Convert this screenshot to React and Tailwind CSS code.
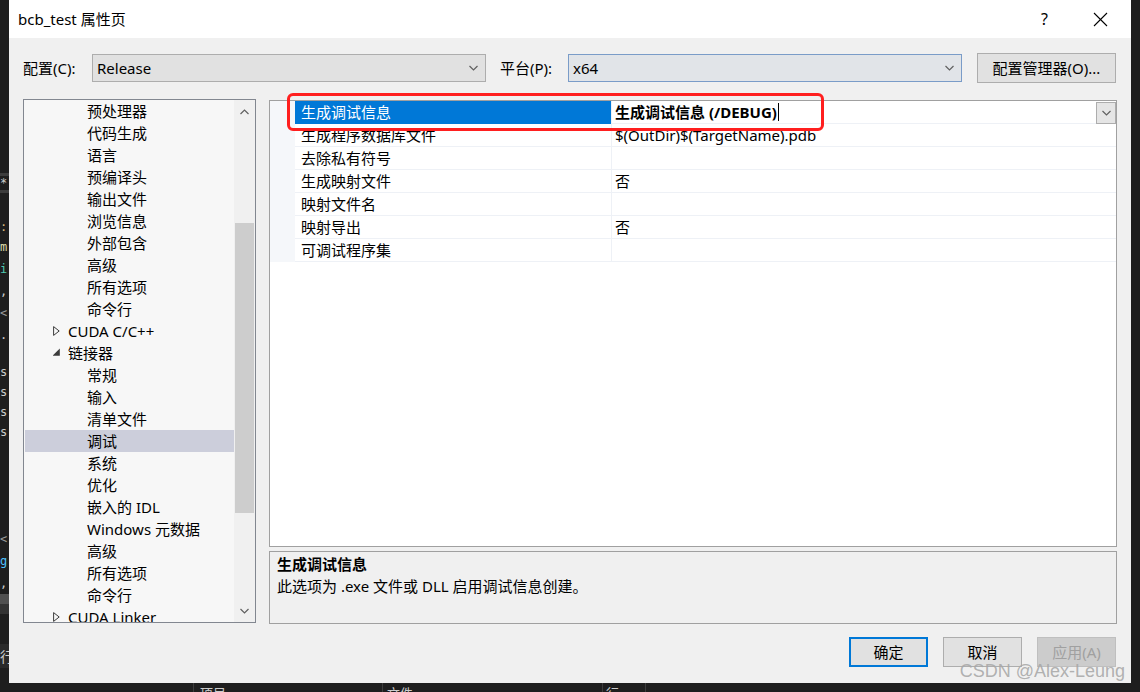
import React from 'react';

const FONT = "font-['Noto_Sans','Noto_Sans_CJK_SC',sans-serif]";

const treeItems = [
  { t: '预处理器', l: 2 },
  { t: '代码生成', l: 2 },
  { t: '语言', l: 2 },
  { t: '预编译头', l: 2 },
  { t: '输出文件', l: 2 },
  { t: '浏览信息', l: 2 },
  { t: '外部包含', l: 2 },
  { t: '高级', l: 2 },
  { t: '所有选项', l: 2 },
  { t: '命令行', l: 2 },
  { t: 'CUDA C/C++', l: 1, arrow: 'closed' },
  { t: '链接器', l: 1, arrow: 'open' },
  { t: '常规', l: 2 },
  { t: '输入', l: 2 },
  { t: '清单文件', l: 2 },
  { t: '调试', l: 2, selected: true },
  { t: '系统', l: 2 },
  { t: '优化', l: 2 },
  { t: '嵌入的 IDL', l: 2 },
  { t: 'Windows 元数据', l: 2 },
  { t: '高级', l: 2 },
  { t: '所有选项', l: 2 },
  { t: '命令行', l: 2 },
  { t: 'CUDA Linker', l: 1, arrow: 'closed' },
];

const gridRows = [
  { name: '生成调试信息', value: '生成调试信息 (/DEBUG)', selected: true },
  { name: '生成程序数据库文件', value: '$(OutDir)$(TargetName).pdb' },
  { name: '去除私有符号', value: '' },
  { name: '生成映射文件', value: '否' },
  { name: '映射文件名', value: '' },
  { name: '映射导出', value: '否' },
  { name: '可调试程序集', value: '' },
];

function Chevron({ up = false, color = '#606060' }) {
  return (
    <svg width="9" height="6" viewBox="0 0 9 6">
      <polyline
        points={up ? '0.5,5 4.5,1 8.5,5' : '0.5,1 4.5,5 8.5,1'}
        fill="none"
        stroke={color}
        strokeWidth="1.2"
      />
    </svg>
  );
}

function Combo({ value, focused }) {
  return (
    <div
      className={`w-[394px] h-[28px] flex items-center justify-between pl-[4px] pr-[7px] border ${
        focused ? 'border-[#7a9cc8] bg-[#e1e4e8]' : 'border-[#adadad] bg-[#e1e1e1]'
      }`}
    >
      <span>{value}</span>
      <Chevron />
    </div>
  );
}

function TreeRow({ item }) {
  return (
    <div
      className={`h-[22px] flex items-center ml-[1px] ${item.selected ? 'bg-[#cccedb]' : ''} ${
        item.l === 2 ? 'pl-[62px]' : 'pl-[28px]'
      }`}
    >
      {item.arrow === 'closed' && (
        <svg width="7" height="10" viewBox="0 0 7 10" className="mr-[8px]">
          <polygon points="0.6,0.6 6.2,5 0.6,9.4" fill="none" stroke="#3c3c3c" strokeWidth="1" />
        </svg>
      )}
      {item.arrow === 'open' && (
        <svg width="7" height="10" viewBox="0 0 7 10" className="mr-[8px]">
          <polygon points="6.8,0.5 6.8,7.8 -0.5,7.8" fill="#3c3c3c" />
        </svg>
      )}
      <span className="whitespace-nowrap">{item.t}</span>
    </div>
  );
}

function Tree() {
  return (
    <div className="w-[233px] h-[524px] border border-[#828790] bg-[#f7f7f7] flex overflow-hidden">
      <div className="flex-1 overflow-hidden">
        {treeItems.map((it, i) => (
          <TreeRow key={i} item={it} />
        ))}
      </div>
      <div className="w-[21px] bg-[#f0f0f0] flex flex-col items-center">
        <div className="h-[23px] flex items-center justify-center">
          <Chevron up />
        </div>
        <div className="h-[100px]" />
        <div className="w-[19px] h-[290px] bg-[#cdcdcd]" />
        <div className="flex-1" />
        <div className="h-[23px] flex items-center justify-center">
          <Chevron />
        </div>
      </div>
    </div>
  );
}

function PropertyGrid() {
  return (
    <div className="relative w-[848px] h-[447px] mt-[1px] border border-[#a0a0a0] bg-white">
      {gridRows.map((r, i) => (
        <div key={i} className="h-[23px] flex">
          <div className="w-[25px] bg-[#f5f7fa]" />
          <div
            className={`w-[316px] pl-[6px] flex items-center border-b ${
              r.selected ? 'bg-[#0078d7] text-white border-[#0078d7]' : 'border-[#eef1f6]'
            }`}
          >
            {r.name}
          </div>
          <div className="w-px bg-[#eef1f6]" />
          <div className="flex-1 flex items-center pl-[3px] border-b border-[#eef1f6]">
            {r.selected ? (
              <>
                <span className="font-bold">{r.value}</span>
                <span className="w-px h-[18px] bg-black ml-[1px]" />
                <div className="ml-auto w-[20px] h-[22px] mt-[1px] border border-[#adadad] bg-[#e5e5e5] flex items-center justify-center">
                  <Chevron />
                </div>
              </>
            ) : (
              r.value
            )}
          </div>
        </div>
      ))}
      {/* red annotation box */}
      <div className="absolute left-[17px] top-[-8px] w-[537px] h-[38px] border-[3.5px] border-[#ff1f1f] rounded-[6px]" />
    </div>
  );
}

function Button({ children, primary, disabled }) {
  return (
    <div
      className={`h-[30px] w-[79px] flex items-center justify-center ${
        primary
          ? 'border-2 border-[#0078d7] bg-[#e1e1e1]'
          : disabled
          ? 'border border-[#bfbfbf] bg-[#cccccc] text-[#a0a0a0]'
          : 'border border-[#adadad] bg-[#e1e1e1]'
      }`}
    >
      {children}
    </div>
  );
}

function LeftStrip() {
  return (
    <div className="w-[9px] bg-[#1e1e1e] flex flex-col text-[12px] leading-[20px] font-['DejaVu_Sans_Mono',monospace] overflow-hidden">
      <div className="h-[173px]" />
      <div className="h-[3px] bg-[#3c3c3c]" />
      <div className="h-[14px] text-[#cccccc] leading-[14px]">*</div>
      <div className="h-[3px] bg-[#3c3c3c]" />
      <div className="h-[25px]" />
      <div className="text-[#d7ba7d] leading-[18px]">:</div>
      <div className="text-[#dcdcaa] leading-[22px]">m</div>
      <div className="text-[#4ec9b0] leading-[22px]">i</div>
      <div className="text-[#cccccc] leading-[22px]">,</div>
      <div className="text-[#999999] leading-[22px]">&lt;</div>
      <div className="text-[#cccccc] leading-[22px]">.</div>
      <div className="h-[16px]" />
      <div className="text-[#cccccc]">s</div>
      <div className="text-[#cccccc]">s</div>
      <div className="text-[#cccccc]">s</div>
      <div className="text-[#cccccc]">s</div>
      <div className="h-[86px]" />
      <div className="text-[#999999] leading-[22px]">&lt;</div>
      <div className="text-[#4fc1ff] leading-[22px]">g</div>
      <div className="text-[#cccccc] leading-[22px]">,</div>
      <div className="h-[10px] bg-[#505050]" />
      <div className="h-[10px] bg-[#333333]" />
      <div className="h-[30px]" />
      <div className="h-[24px] bg-[#2a2a2a] text-[#cccccc] text-[14px] leading-[24px] font-['Noto_Sans_CJK_SC',sans-serif]">行</div>
    </div>
  );
}

function BottomStrip() {
  return (
    <div className="h-[9px] bg-[#1e1e1e] flex text-[#cccccc] text-[13px] leading-[20px] overflow-hidden">
      <div className="w-[194px] border-r border-[#3c3c3c]" />
      <div className="w-[189px] border-r border-[#3c3c3c] pl-[6px]">项目</div>
      <div className="w-[220px] border-r border-[#3c3c3c] pl-[4px]">文件</div>
      <div className="w-[43px] border-r border-[#3c3c3c] pl-[3px]">行</div>
      <div className="flex-1" />
    </div>
  );
}

export default function App() {
  return (
    <div className={`w-[1140px] h-[692px] bg-[#1e1e1e] flex flex-col overflow-hidden text-[15px] leading-[22px] text-black ${FONT}`}>
      <div className="h-[683px] flex">
        <LeftStrip />
        <div className="relative w-[1122px] flex flex-col bg-[#f0f0f0]">
          {/* title bar */}
          <div className="h-[38px] bg-white flex items-center justify-between pl-[9px]">
            <span>bcb_test 属性页</span>
            <div className="flex items-center gap-[45px] pr-[23px]">
              <span className="text-[16px]">?</span>
              <svg width="15" height="15" viewBox="0 0 15 15">
                <line x1="1" y1="1" x2="14" y2="14" stroke="#000" strokeWidth="1.1" />
                <line x1="14" y1="1" x2="1" y2="14" stroke="#000" strokeWidth="1.1" />
              </svg>
            </div>
          </div>

          <div className="flex-1 flex flex-col pl-[14px]">
            {/* config row */}
            <div className="mt-[16px] h-[28px] flex items-center">
              <span className="w-[69px]">配置(C):</span>
              <Combo value="Release" />
              <span className="ml-[14px] w-[68px]">平台(P):</span>
              <Combo value="x64" focused />
              <div className="ml-[15px] w-[139px] h-[30px] border border-[#adadad] bg-[#e1e1e1] flex items-center justify-center">
                配置管理器(O)...
              </div>
            </div>

            {/* panels */}
            <div className="mt-[17px] flex items-start">
              <Tree />
              <div className="ml-[13px] flex flex-col">
                <PropertyGrid />
                <div className="mt-[4px] w-[848px] h-[73px] border border-[#a0a0a0] bg-[#f0f0f0] px-[7px] pt-[1px]">
                  <div className="font-bold">生成调试信息</div>
                  <div>此选项为 .exe 文件或 DLL 启用调试信息创建。</div>
                </div>
              </div>
            </div>

            {/* buttons */}
            <div className="mt-[13px] flex justify-end gap-[15px] pr-[15px]">
              <Button primary>确定</Button>
              <Button>取消</Button>
              <Button disabled>应用(A)</Button>
            </div>
          </div>

          {/* watermark */}
          <div className="absolute right-[6px] bottom-[1px] text-[18px] leading-[22px] text-[#a8a8a8]/90 font-['Liberation_Sans',sans-serif]">
            CSDN @Alex-Leung
          </div>
        </div>
        <div className="w-[9px] bg-[#1e1e1e]" />
      </div>
      <BottomStrip />
    </div>
  );
}
